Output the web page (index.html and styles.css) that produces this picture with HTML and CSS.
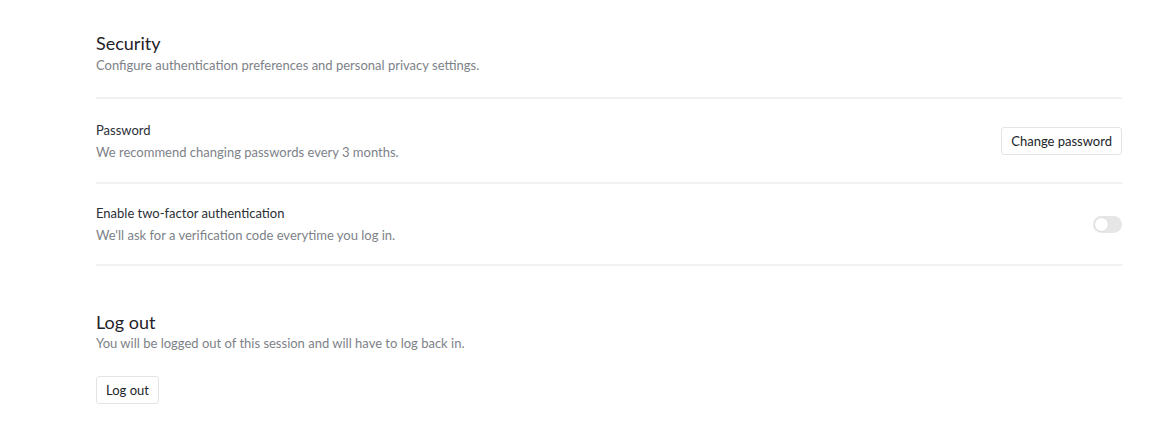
FILE: index.html
```html
<!DOCTYPE html>
<html lang="en">
<head>
    <meta charset="UTF-8">
    <meta name="viewport" content="width=device-width, initial-scale=1.0">
    <title>Security Settings</title>
    <link rel="stylesheet" href="styles.css">
</head>
<body>
<div class="settings">
    <section class="section">
        <div class="section-head">
            <h2>Security</h2>
            <p class="muted">Configure authentication preferences and personal privacy settings.</p>
        </div>
        <div class="row row-password">
            <div class="row-text">
                <h4>Password</h4>
                <p class="muted">We recommend changing passwords every 3 months.</p>
            </div>
            <button class="btn">Change password</button>
        </div>
        <div class="row">
            <div class="row-text">
                <h4>Enable two-factor authentication</h4>
                <p class="muted">We'll ask for a verification code everytime you log in.</p>
            </div>
            <label class="switch">
                <input type="checkbox">
                <span class="slider"></span>
            </label>
        </div>
    </section>

    <section class="section logout">
        <h2>Log out</h2>
        <p class="muted">You will be logged out of this session and will have to log back in.</p>
        <button class="btn">Log out</button>
    </section>
</div>
</body>
</html>
```

FILE: styles.css
```css
/* page */
body {
    margin: 0;
    font-family: Lato, "Open Sans", sans-serif;
    background-color: #fff;
    color: #212529;
}
.settings {
    padding: 31px 42px 0 96px;
}
h2 {
    margin: 0;
    font-size: 18px;
    font-weight: 400;
    line-height: 24px;
    color: #1f2229;
}
h4 {
    margin: 0;
    font-size: 13px;
    font-weight: 400;
    line-height: 20px;
    color: #2b2f36;
}
.muted {
    margin: 0;
    font-size: 13px;
    line-height: 20px;
    color: #7d8288;
}
.section-head {
    padding-bottom: 22px;
    border-bottom: 2px solid #f1f1f1;
}
.row {
    display: flex;
    align-items: center;
    justify-content: space-between;
    height: 80px;
    border-bottom: 2px solid #f1f1f1;
}
.row-password {
    height: 83px;
}
.row-text h4 {
    margin-bottom: 2px;
}
.btn {
    font-family: inherit;
    font-size: 13px;
    color: #212529;
    background-color: #fff;
    border: 1px solid #e2e4e6;
    border-radius: 3px;
    padding: 5px 9px;
    cursor: pointer;
}
.switch {
    position: relative;
    display: inline-block;
    width: 29px;
    height: 17px;
}
.switch input {
    display: none;
}
.slider {
    position: absolute;
    inset: 0;
    background-color: #e6e6e6;
    border-radius: 9px;
    cursor: pointer;
}
.slider::before {
    content: "";
    position: absolute;
    left: 1px;
    top: 1px;
    width: 13px;
    height: 13px;
    border-radius: 50%;
    background-color: #fff;
    border: 1px solid #dcdcdc;
}
.logout {
    padding-top: 46px;
}
.logout h2 {
    line-height: 21px;
}
.logout .btn {
    margin-top: 23px;
}
```
